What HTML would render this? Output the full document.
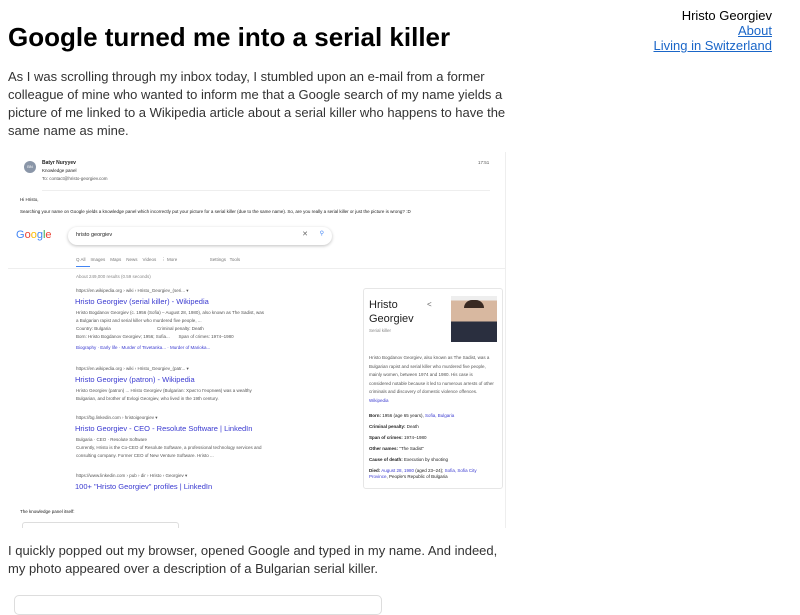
<!DOCTYPE html>
<html><head><meta charset="utf-8"><style>
*{margin:0;padding:0;box-sizing:border-box}
body{width:800px;height:600px;overflow:hidden;background:#fff;font-family:"Liberation Sans",sans-serif;color:#222;position:relative}
.a{position:absolute}
.nav{right:28px;top:8px;text-align:right;font-size:13px;line-height:15px;color:#000}
.nav a{color:#1a66c8;display:block}
h1{left:8px;top:22px;font-size:26px;font-weight:bold;color:#000;letter-spacing:0}
p.t{left:8px;font-size:13px;line-height:18px;color:#333;width:505px}
.img{left:8px;top:152px;width:498px;height:376px;background:#fff;overflow:hidden;border-right:1px solid #eee}
.img .a{white-space:nowrap}
.s{font-size:4.5px;color:#555}
.lk{font-size:7.5px;color:#3a3ad0}
.u{font-size:4.5px;color:#222}
</style></head><body>
<div class="a nav">Hristo Georgiev<a href="#">About</a><a href="#">Living in Switzerland</a></div>
<h1 class="a">Google turned me into a serial killer</h1>
<p class="a t" style="top:68px">As I was scrolling through my inbox today, I stumbled upon an e-mail from a former colleague of mine who wanted to inform me that a Google search of my name yields a picture of me linked to a Wikipedia article about a serial killer who happens to have the same name as mine.</p>
<div class="a img">
 <div class="a" style="left:16px;top:9px;width:12px;height:12px;border-radius:50%;background:#8a96a8;color:#fff;font-size:4px;text-align:center;line-height:12px">BN</div>
 <div class="a" style="left:34px;top:8px;font-size:5px;font-weight:bold">Batyr Nuryyev</div>
 <div class="a" style="left:34px;top:16px;font-size:4.5px">Knowledge panel</div>
 <div class="a s" style="left:34px;top:24px">To: contact@hristo-georgiev.com</div>
 <div class="a s" style="left:470px;top:8px">17:51</div>
 <div class="a" style="left:34px;top:38px;width:448px;height:1px;background:#eee"></div>
 <div class="a u" style="left:12px;top:45px">Hi Hristo,</div>
 <div class="a u" style="left:12px;top:57px">Searching your name on Google yields a knowledge panel which incorrectly put your picture for a serial killer (due to the same name). So, are you really a serial killer or just the picture is wrong? :D</div>
 <div class="a" style="left:8px;top:77px;font-size:11px;color:#4285f4">G<span style="color:#ea4335">o</span><span style="color:#fbbc05">o</span>g<span style="color:#34a853">l</span><span style="color:#ea4335">e</span></div>
 <div class="a" style="left:60px;top:75px;width:264px;height:18px;border-radius:9px;box-shadow:0 1px 3px rgba(0,0,0,.25);font-size:5.5px;padding:5px 8px">hristo georgiev<span style="position:absolute;right:24px;color:#666;font-size:7px;top:3px">✕</span><span style="position:absolute;right:8px;color:#4285f4;top:3px;font-size:6px">⚲</span></div>
 <div class="a s" style="left:68px;top:105px;color:#777">Q All &nbsp;&nbsp; Images &nbsp;&nbsp; Maps &nbsp;&nbsp; News &nbsp;&nbsp; Videos &nbsp;&nbsp; ⋮ More &nbsp;&nbsp;&nbsp;&nbsp;&nbsp;&nbsp;&nbsp;&nbsp;&nbsp;&nbsp;&nbsp;&nbsp;&nbsp;&nbsp;&nbsp;&nbsp;&nbsp;&nbsp;&nbsp;&nbsp;&nbsp;&nbsp;&nbsp;&nbsp; Settings &nbsp; Tools</div>
 <div class="a" style="left:68px;top:114px;width:14px;height:1px;background:#4285f4"></div>
 <div class="a" style="left:0;top:116px;width:498px;height:1px;background:#eee"></div>
 <div class="a s" style="left:68px;top:122px;color:#888">About 249,000 results (0.59 seconds)</div>
 <div class="a s" style="left:68px;top:136px">https://en.wikipedia.org › wiki › Hristo_Georgiev_(seri... ▾</div>
 <div class="a lk" style="left:67px;top:145px">Hristo Georgiev (serial killer) - Wikipedia</div>
 <div class="a s" style="left:68px;top:157px;line-height:8px">Hristo Bogdanov Georgiev (c. 1956 (Sofia) – August 28, 1980), also known as The Sadist, was<br>a Bulgarian rapist and serial killer who murdered five people, ...<br>Country: Bulgaria &nbsp;&nbsp;&nbsp;&nbsp;&nbsp;&nbsp;&nbsp;&nbsp;&nbsp;&nbsp;&nbsp;&nbsp;&nbsp;&nbsp;&nbsp;&nbsp;&nbsp;&nbsp;&nbsp;&nbsp;&nbsp;&nbsp;&nbsp;&nbsp;&nbsp;&nbsp;&nbsp;&nbsp;&nbsp;&nbsp;&nbsp;&nbsp;&nbsp;&nbsp;&nbsp; Criminal penalty: Death<br>Born: Hristo Bogdanov Georgiev; 1956; Sofia... &nbsp;&nbsp;&nbsp;&nbsp;&nbsp; Span of crimes: 1974–1980</div>
 <div class="a" style="left:68px;top:193px;font-size:4.5px;color:#3a3ad0">Biography · Early life · Murder of Tsvetanka... · Murder of Marioka...</div>
 <div class="a s" style="left:68px;top:214px">https://en.wikipedia.org › wiki › Hristo_Georgiev_(patr... ▾</div>
 <div class="a lk" style="left:67px;top:223px">Hristo Georgiev (patron) - Wikipedia</div>
 <div class="a s" style="left:68px;top:235px;line-height:8px">Hristo Georgiev (patron) ... Hristo Georgiev (Bulgarian: Христо Георгиев) was a wealthy<br>Bulgarian, and brother of Evlogi Georgiev, who lived in the 19th century.</div>
 <div class="a s" style="left:68px;top:263px">https://bg.linkedin.com › hristoigeorgiev ▾</div>
 <div class="a lk" style="left:67px;top:272px">Hristo Georgiev - CEO - Resolute Software | LinkedIn</div>
 <div class="a s" style="left:68px;top:284px;line-height:8px">Bulgaria · CEO · Resolute Software<br>Currently, Hristo is the Co-CEO of Resolute Software, a professional technology services and<br>consulting company. Former CEO of New Venture Software. Hristo ...</div>
 <div class="a s" style="left:68px;top:321px">https://www.linkedin.com › pub › dir › Hristo › Georgiev ▾</div>
 <div class="a lk" style="left:67px;top:330px">100+ "Hristo Georgiev" profiles | LinkedIn</div>
 <div class="a" style="left:355px;top:136px;width:140px;height:201px;border:1px solid #e6e6e6;border-radius:3px"></div>
 <div class="a" style="left:361px;top:146px;font-size:11px;line-height:14px;color:#222">Hristo<br>Georgiev</div>
 <div class="a" style="left:419px;top:148px;font-size:8px;color:#666">&lt;</div>
 <div class="a s" style="left:361px;top:176px;color:#888">Serial killer</div>
 <div class="a" style="left:443px;top:144px;width:46px;height:46px;background:linear-gradient(#eee 0 10%,#d8b8a0 10% 55%,#2a2f3f 55%)"></div>
 <div class="a" style="left:456px;top:148px;width:20px;height:8px;background:#3a2a22;border-radius:8px 8px 0 0"></div>
 <div class="a s" style="left:361px;top:202px;line-height:8.5px;white-space:normal;width:127px">Hristo Bogdanov Georgiev, also known as The Sadist, was a Bulgarian rapist and serial killer who murdered five people, mainly women, between 1974 and 1980. His case is considered notable because it led to numerous arrests of other criminals and discovery of domestic violence offences. <span style="color:#3a3ad0">Wikipedia</span></div>
 <div class="a u" style="left:361px;top:258px;line-height:11px"><b>Born:</b> 1956 (age 65 years), <span style="color:#3a3ad0">Sofia, Bulgaria</span><br><b>Criminal penalty:</b> Death<br><b>Span of crimes:</b> 1974–1980<br><b>Other names:</b> "The Sadist"<br><b>Cause of death:</b> Execution by shooting<br><b>Died:</b> <span style="color:#3a3ad0">August 28, 1980</span> (aged 23–24); <span style="color:#3a3ad0">Sofia, Sofia City</span></div>
 <div class="a u" style="left:361px;top:322px"><span style="color:#3a3ad0">Province</span>, People's Republic of Bulgaria</div>
 <div class="a u" style="left:12px;top:357px">The knowledge panel itself:</div>
 <div class="a" style="left:14px;top:370px;width:157px;height:20px;border:1px solid #ddd;border-radius:3px"></div>
</div>
<p class="a t" style="top:542px">I quickly popped out my browser, opened Google and typed in my name. And indeed, my photo appeared over a description of a Bulgarian serial killer.</p>
<div class="a" style="left:14px;top:595px;width:368px;height:20px;border:1px solid #ddd;border-radius:5px"></div>
</body></html>
